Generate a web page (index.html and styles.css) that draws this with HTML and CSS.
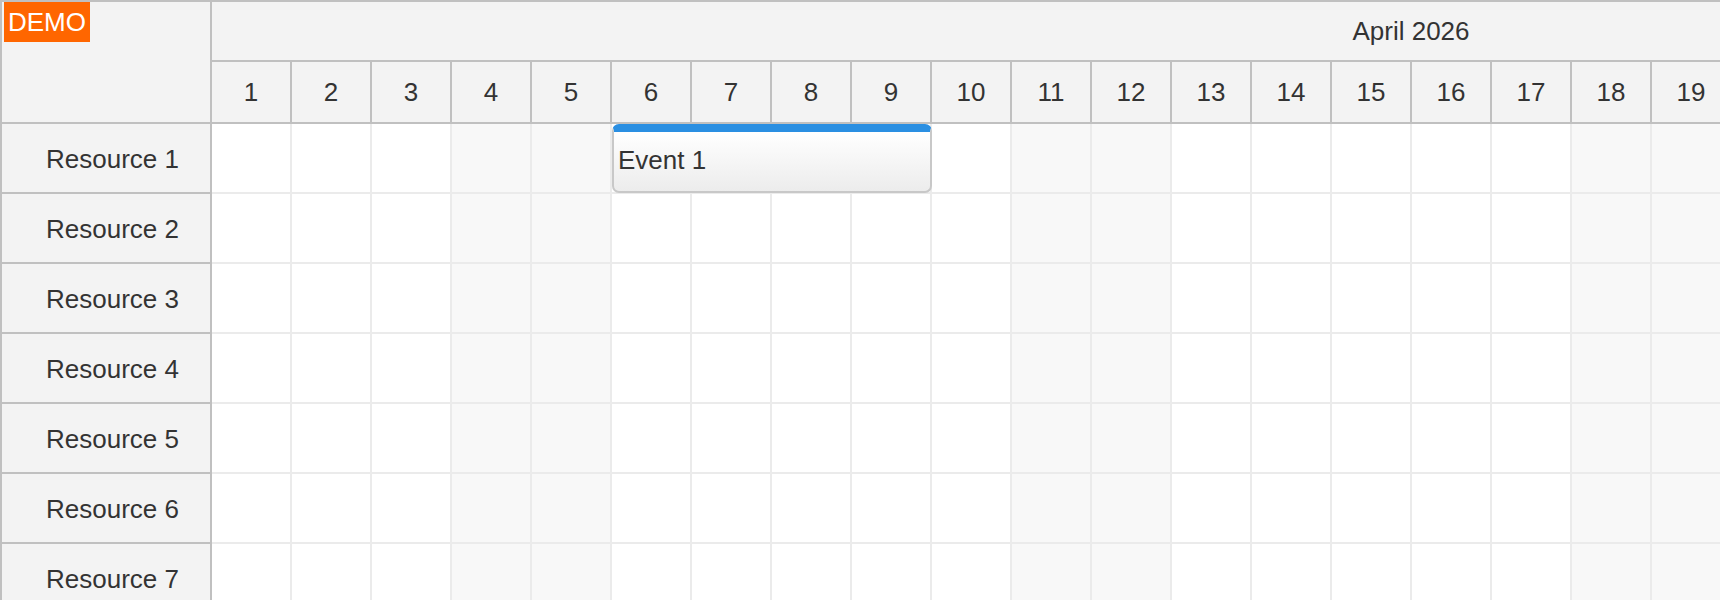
FILE: index.html
```html
<!DOCTYPE html>
<html lang="en">
<head>
  <meta charset="UTF-8">
  <meta name="viewport" content="width=device-width, initial-scale=1.0">
  <title>Scheduler</title>
  <link rel="stylesheet" href="styles.css">
</head>
<body>
  <div class="scheduler">
    <div class="rh-col">
      <div class="corner">
        <div class="demo">DEMO</div>
      </div>
      <div id="resources"></div>
    </div>
    <div class="timeline">
      <div class="tl-inner" id="timeline">
        <div class="month">April 2026</div>
        <div class="days" id="days"></div>
        <div id="rows"></div>
      </div>
    </div>
  </div>

  <script>
    const year = 2026;
    const month = 3; // April
    const dayCount = new Date(year, month + 1, 0).getDate();
    const resources = ['Resource 1', 'Resource 2', 'Resource 3', 'Resource 4', 'Resource 5', 'Resource 6', 'Resource 7', 'Resource 8'];
    const events = [
      { text: 'Event 1', resource: 0, start: 6, end: 9 }
    ];

    function isWeekend(day) {
      const d = new Date(year, month, day).getDay();
      return d === 0 || d === 6;
    }

    const days = document.getElementById('days');
    for (let i = 1; i <= dayCount; i++) {
      const cell = document.createElement('div');
      cell.className = 'day';
      cell.textContent = i;
      days.appendChild(cell);
    }

    const resList = document.getElementById('resources');
    const rows = document.getElementById('rows');
    resources.forEach(function(name, r) {
      const rh = document.createElement('div');
      rh.className = 'resource';
      rh.textContent = name;
      resList.appendChild(rh);

      const row = document.createElement('div');
      row.className = 'row';
      for (let i = 1; i <= dayCount; i++) {
        const cell = document.createElement('div');
        cell.className = isWeekend(i) ? 'cell weekend' : 'cell';
        row.appendChild(cell);
      }

      events.filter(e => e.resource === r).forEach(function(e) {
        const ev = document.createElement('div');
        ev.className = 'event';
        ev.style.left = ((e.start - 1) * 80) + 'px';
        ev.style.width = ((e.end - e.start + 1) * 80) + 'px';
        ev.textContent = e.text;
        row.appendChild(ev);
      });

      rows.appendChild(row);
    });
  </script>
</body>
</html>
```

FILE: styles.css
```css
body {
  margin: 0;
  padding: 0;
  font-family: "Liberation Sans", Arial, sans-serif;
  font-size: 26px;
  color: #333;
  background-color: #fff;
}
.scheduler {
  display: flex;
  width: 1720px;
  height: 600px;
  box-sizing: border-box;
  border-top: 2px solid #c0c0c0;
  border-left: 2px solid #c0c0c0;
  overflow: hidden;
}
.rh-col {
  flex: 0 0 210px;
  box-sizing: border-box;
  border-right: 2px solid #c0c0c0;
  background-color: #f3f3f3;
}
.corner {
  position: relative;
  height: 122px;
  box-sizing: border-box;
  border-bottom: 2px solid #c0c0c0;
}
.demo {
  position: absolute;
  top: 0;
  left: 2px;
  height: 40px;
  line-height: 40px;
  padding: 0 4px;
  background-color: #ff6600;
  color: #fff;
}
.resource {
  display: flex;
  align-items: center;
  height: 70px;
  box-sizing: border-box;
  padding: 2px 0 0 44px;
  border-bottom: 2px solid #c0c0c0;
}
.timeline {
  flex: 1;
  overflow: hidden;
}
.tl-inner {
  width: 2400px;
}
.month {
  display: flex;
  align-items: center;
  justify-content: center;
  height: 60px;
  box-sizing: border-box;
  border-bottom: 2px solid #c0c0c0;
  border-right: 2px solid #c0c0c0;
  background-color: #f3f3f3;
}
.days {
  display: flex;
}
.day {
  display: flex;
  align-items: center;
  justify-content: center;
  flex: 0 0 80px;
  height: 62px;
  box-sizing: border-box;
  border-right: 2px solid #c0c0c0;
  border-bottom: 2px solid #c0c0c0;
  background-color: #f3f3f3;
}
.row {
  position: relative;
  display: flex;
}
.cell {
  flex: 0 0 80px;
  height: 70px;
  box-sizing: border-box;
  border-right: 2px solid #ebebeb;
  border-bottom: 2px solid #ebebeb;
  background-color: #fff;
}
.cell.weekend {
  background-color: #f8f8f8;
}
.event {
  position: absolute;
  top: 0;
  height: 69px;
  box-sizing: border-box;
  padding: 13px 4px 0;
  border: 2px solid #c8c8c8;
  border-top: 8px solid #2a8fe2;
  border-radius: 7px;
  background: linear-gradient(to bottom, #ffffff, #ececec);
  white-space: nowrap;
  overflow: hidden;
}
```
